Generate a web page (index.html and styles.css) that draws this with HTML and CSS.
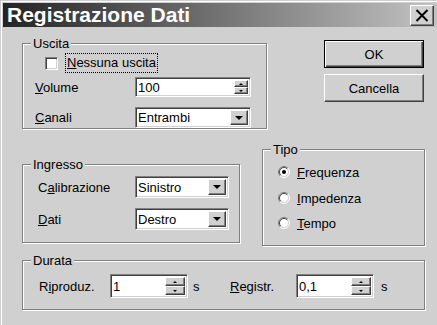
FILE: index.html
```html
<!DOCTYPE html>
<html lang="it">
<head>
    <meta charset="UTF-8">
    <title>Registrazione Dati</title>
    <link rel="stylesheet" href="styles.css">
</head>
<body>
<div class="window">
    <div class="titlebar">
        <span class="title">Registrazione Dati</span>
        <button class="close">
            <svg width="14" height="13" viewBox="0 0 14 13">
                <path d="M1.5 1 L12.5 12 M12.5 1 L1.5 12" stroke="#000" stroke-width="2" fill="none"/>
            </svg>
        </button>
    </div>

    <div class="content">
        <div class="top-row">
            <!-- Uscita -->
            <div class="group uscita">
                <span class="legend">Uscita</span>
                <div class="check-row">
                    <span class="checkbox"></span>
                    <span class="focus"><u>N</u>essuna uscita</span>
                </div>
                <div class="field-row volume-row">
                    <span class="label"><u>V</u>olume</span>
                    <div class="sunken volume">
                        <span class="value">100</span>
                        <div class="spin">
                            <span class="spin-btn"><i class="up"></i></span>
                            <span class="spin-btn"><i class="down"></i></span>
                        </div>
                    </div>
                </div>
                <div class="field-row canali-row">
                    <span class="label"><u>C</u>anali</span>
                    <div class="sunken combo canali">
                        <span class="value">Entrambi</span>
                        <span class="drop"><svg width="8" height="4" viewBox="0 0 8 4"><path d="M0 0 H8 L4 4 Z" fill="#000"/></svg></span>
                    </div>
                </div>
            </div>

            <div class="buttons">
                <button class="btn default">OK</button>
                <button class="btn">Cancella</button>
            </div>
        </div>

        <div class="mid-row">
            <!-- Ingresso -->
            <div class="group ingresso">
                <span class="legend">Ingresso</span>
                <div class="field-row calib-row">
                    <span class="label">C<u>a</u>librazione</span>
                    <div class="sunken combo short">
                        <span class="value">Sinistro</span>
                        <span class="drop"><svg width="8" height="4" viewBox="0 0 8 4"><path d="M0 0 H8 L4 4 Z" fill="#000"/></svg></span>
                    </div>
                </div>
                <div class="field-row dati-row">
                    <span class="label"><u>D</u>ati</span>
                    <div class="sunken combo short">
                        <span class="value">Destro</span>
                        <span class="drop"><svg width="8" height="4" viewBox="0 0 8 4"><path d="M0 0 H8 L4 4 Z" fill="#000"/></svg></span>
                    </div>
                </div>
            </div>

            <!-- Tipo -->
            <div class="group tipo">
                <span class="legend">Tipo</span>
                <div class="radio-row first">
                    <svg class="radio" width="12" height="12" viewBox="0 0 12 12">
                        <circle cx="6" cy="6" r="5" fill="#fff"/>
                        <path d="M2.1 9.9 A5.5 5.5 0 0 1 9.9 2.1" stroke="#808080" fill="none"/>
                        <path d="M9.9 2.1 A5.5 5.5 0 0 1 2.1 9.9" stroke="#fff" fill="none"/>
                        <path d="M2.8 9.2 A4.5 4.5 0 0 1 9.2 2.8" stroke="#404040" fill="none"/>
                        <path d="M9.2 2.8 A4.5 4.5 0 0 1 2.8 9.2" stroke="#d0d0d0" fill="none"/>
                        <circle cx="6" cy="6" r="2" fill="#000"/>
                    </svg>
                    <span><u>F</u>requenza</span>
                </div>
                <div class="radio-row second">
                    <svg class="radio" width="12" height="12" viewBox="0 0 12 12">
                        <circle cx="6" cy="6" r="5" fill="#fff"/>
                        <path d="M2.1 9.9 A5.5 5.5 0 0 1 9.9 2.1" stroke="#808080" fill="none"/>
                        <path d="M9.9 2.1 A5.5 5.5 0 0 1 2.1 9.9" stroke="#fff" fill="none"/>
                        <path d="M2.8 9.2 A4.5 4.5 0 0 1 9.2 2.8" stroke="#404040" fill="none"/>
                        <path d="M9.2 2.8 A4.5 4.5 0 0 1 2.8 9.2" stroke="#d0d0d0" fill="none"/>
                    </svg>
                    <span><u>I</u>mpedenza</span>
                </div>
                <div class="radio-row third">
                    <svg class="radio" width="12" height="12" viewBox="0 0 12 12">
                        <circle cx="6" cy="6" r="5" fill="#fff"/>
                        <path d="M2.1 9.9 A5.5 5.5 0 0 1 9.9 2.1" stroke="#808080" fill="none"/>
                        <path d="M9.9 2.1 A5.5 5.5 0 0 1 2.1 9.9" stroke="#fff" fill="none"/>
                        <path d="M2.8 9.2 A4.5 4.5 0 0 1 9.2 2.8" stroke="#404040" fill="none"/>
                        <path d="M9.2 2.8 A4.5 4.5 0 0 1 2.8 9.2" stroke="#d0d0d0" fill="none"/>
                    </svg>
                    <span><u>T</u>empo</span>
                </div>
            </div>
        </div>

        <!-- Durata -->
        <div class="group durata">
            <span class="legend">Durata</span>
            <div class="dur-row">
                <span class="dlabel first">R<u>i</u>produz.</span>
                <div class="sunken spinbox">
                    <span class="value">1</span>
                    <div class="spin wide">
                        <span class="spin-btn"><i class="up"></i></span>
                        <span class="spin-btn"><i class="down"></i></span>
                    </div>
                </div>
                <span class="unit first">s</span>
                <span class="dlabel second"><u>R</u>egistr.</span>
                <div class="sunken spinbox">
                    <span class="value">0,1</span>
                    <div class="spin wide">
                        <span class="spin-btn"><i class="up"></i></span>
                        <span class="spin-btn"><i class="down"></i></span>
                    </div>
                </div>
                <span class="unit second">s</span>
            </div>
        </div>
    </div>
</div>
</body>
</html>
```

FILE: styles.css
```css
* {
    box-sizing: border-box;
}
body {
    margin: 0;
    width: 437px;
    height: 325px;
    overflow: hidden;
    background-color: #d0d0d0;
    font-family: "Liberation Sans", Arial, sans-serif;
    font-size: 13px;
    color: #000;
}
.window {
    height: 325px;
    padding: 3px 0 0 3px;
    box-shadow: inset 1px 1px #d0d0d0, inset 2px 2px #fff;
}
.titlebar {
    height: 24px;
    display: flex;
    align-items: center;
    justify-content: space-between;
    padding: 0 3px 0 4px;
    background: linear-gradient(to right, #242424, #c3c3c3);
}
.title {
    color: #fff;
    font-weight: bold;
    font-size: 21px;
}
.close {
    width: 24px;
    height: 21px;
    padding: 0;
    display: flex;
    align-items: center;
    justify-content: center;
    background-color: #d0d0d0;
    border: 1px solid;
    border-color: #fff #404040 #404040 #fff;
    box-shadow: inset -1px -1px #808080;
}
.content {
    padding-left: 19px;
}
.top-row,
.mid-row {
    display: flex;
    align-items: flex-start;
}

/* group boxes */
.group {
    position: relative;
    border: 1px solid #808080;
    box-shadow: inset 1px 1px #fff, 1px 1px #fff;
}
.legend {
    position: absolute;
    top: -8px;
    left: 8px;
    padding: 0 2px;
    line-height: 15px;
    background-color: #d0d0d0;
}
.uscita {
    width: 245px;
    height: 86px;
    margin-top: 16px;
    padding-top: 9px;
}
.ingresso {
    width: 218px;
    height: 79px;
    margin-top: 35px;
    padding-top: 11px;
}
.tipo {
    width: 163px;
    height: 97px;
    margin-top: 20px;
    margin-left: 22px;
}
.durata {
    width: 403px;
    height: 50px;
    margin-top: 14px;
}

/* rows */
.check-row {
    height: 20px;
    display: flex;
    align-items: center;
    padding-left: 22px;
}
.checkbox {
    width: 13px;
    height: 13px;
    background-color: #fff;
    border: 1px solid;
    border-color: #808080 #fff #fff #808080;
    box-shadow: inset 1px 1px #404040, inset -1px -1px #d0d0d0;
}
.focus {
    height: 20px;
    margin-left: 7px;
    padding: 0 1px;
    line-height: 18px;
    border: 1px dotted #000;
}
.field-row {
    display: flex;
    align-items: center;
}
.uscita .field-row {
    padding-left: 12px;
}
.uscita .label {
    width: 100px;
}
.volume-row {
    margin-top: 4px;
}
.canali-row {
    margin-top: 10px;
}
.ingresso .field-row {
    padding-left: 15px;
}
.ingresso .label {
    width: 97px;
}
.dati-row {
    margin-top: 10px;
}

/* sunken edit / combo */
.sunken {
    display: flex;
    align-items: stretch;
    padding: 2px;
    background-color: #fff;
    border: 1px solid;
    border-color: #808080 #fff #fff #808080;
    box-shadow: inset 1px 1px #404040, inset -1px -1px #d0d0d0;
}
.value {
    flex: 1;
    display: flex;
    align-items: center;
}
.volume {
    width: 116px;
    height: 20px;
}
.canali {
    width: 116px;
    height: 21px;
}
.short {
    width: 94px;
    height: 22px;
}
.spinbox {
    width: 78px;
    height: 24px;
}
.drop {
    width: 18px;
    display: flex;
    align-items: center;
    justify-content: center;
    background-color: #d0d0d0;
    border: 1px solid;
    border-color: #fff #404040 #404040 #fff;
    box-shadow: inset -1px -1px #808080;
}
.spin {
    width: 14px;
    display: flex;
    flex-direction: column;
}
.spin.wide {
    width: 20px;
}
.spin-btn {
    flex: 1;
    display: flex;
    align-items: center;
    justify-content: center;
    background-color: #d0d0d0;
    border: 1px solid;
    border-color: #fff #404040 #404040 #fff;
    box-shadow: inset -1px -1px #808080;
}
.up,
.down {
    width: 0;
    height: 0;
    border-left: 2px solid transparent;
    border-right: 2px solid transparent;
}
.up {
    border-bottom: 2px solid #000;
}
.down {
    border-top: 2px solid #000;
}

/* buttons */
.buttons {
    display: flex;
    flex-direction: column;
    gap: 6px;
    margin-top: 13px;
    margin-left: 57px;
}
.btn {
    width: 100px;
    height: 28px;
    padding: 0;
    font: inherit;
    color: #000;
    background-color: #d0d0d0;
    border: 1px solid;
    border-color: #fff #404040 #404040 #fff;
    box-shadow: inset -1px -1px #808080;
}
.btn.default {
    border-color: #000;
    box-shadow: inset 1px 1px #fff, inset -1px -1px #404040, inset -2px -2px #808080;
}

/* radios */
.radio-row {
    height: 20px;
    display: flex;
    align-items: center;
    gap: 7px;
    padding-left: 15px;
}
.radio-row.first {
    margin-top: 12px;
}
.radio-row.second {
    margin-top: 6px;
}
.radio-row.third {
    margin-top: 5px;
}

/* durata */
.dur-row {
    display: flex;
    align-items: center;
    margin-top: 13px;
    padding-left: 16px;
}
.dlabel.first {
    width: 71px;
}
.dlabel.second {
    width: 66px;
}
.unit.first {
    width: 37px;
    margin-left: 5px;
}
.unit.second {
    margin-left: 7px;
}
```
